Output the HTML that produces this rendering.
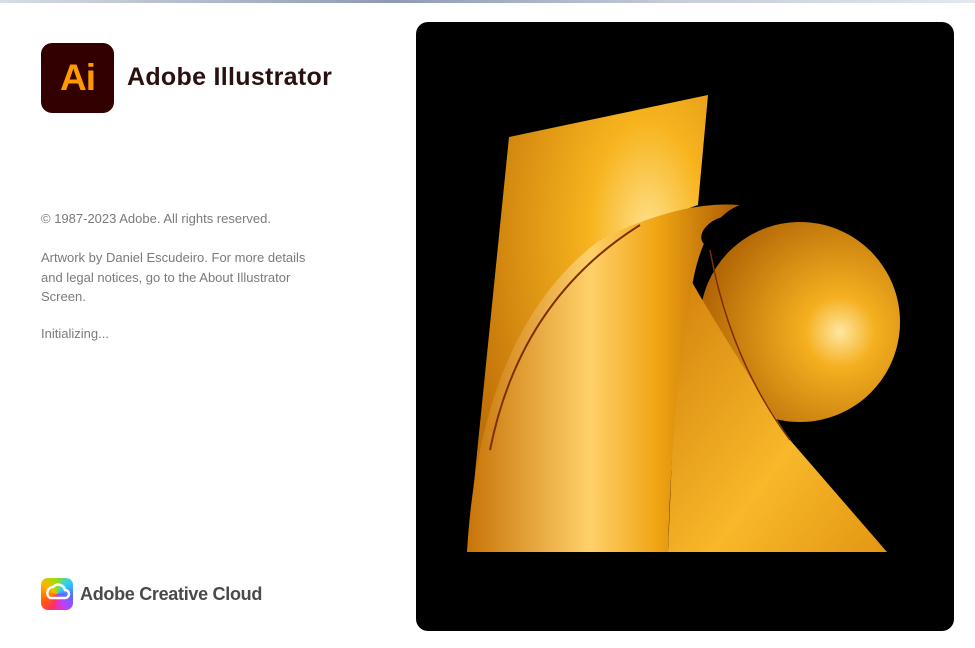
<!DOCTYPE html>
<html><head><meta charset="utf-8"><style>
html,body{margin:0;padding:0;width:975px;height:648px;overflow:hidden;background:#fff;font-family:"Liberation Sans",sans-serif;}
.top{position:absolute;left:0;top:0;width:975px;height:3px;background:linear-gradient(90deg,#d8dde6,#8e9bb3 40%,#c6cddb 70%,#e4e7ee);}
.logo{position:absolute;left:41px;top:43px;width:73px;height:70px;background:#330000;border-radius:11px;color:#ff9a00;font-weight:bold;font-size:37px;line-height:70px;text-align:center;letter-spacing:-1px;}
.title{position:absolute;left:127px;top:63px;font-size:25px;font-weight:bold;color:#2b1010;letter-spacing:0.3px;}
.txt{position:absolute;left:41px;color:#7a7a7a;font-size:13px;line-height:19.5px;letter-spacing:0;}
.panel{position:absolute;left:416px;top:22px;width:538px;height:609px;background:#000;border-radius:12px;overflow:hidden;}
.cc{position:absolute;left:41px;top:578px;width:32px;height:32px;border-radius:7px;background:conic-gradient(from 200deg,#ff2f5f,#ff6a00,#ffb300,#9be000,#2bd0ff,#5a6bff,#c23cff,#ff2f5f);}
.cct{position:absolute;left:80px;top:584px;font-size:18px;font-weight:bold;color:#4a4a4a;letter-spacing:-0.3px;}
</style></head><body>
<div class="top"></div>
<div class="logo">Ai</div>
<div class="title">Adobe Illustrator</div>
<div class="txt" style="top:209px">© 1987-2023 Adobe. All rights reserved.</div>
<div class="txt" style="top:248px">Artwork by Daniel Escudeiro. For more details<br>and legal notices, go to the About Illustrator<br>Screen.</div>
<div class="txt" style="top:324px">Initializing...</div>
<div class="cc"><svg width="32" height="32" viewBox="0 0 32 32"><path d="M9 20 a6 6 0 0 1 3-11 a7 7 0 0 1 12 3 a4 4 0 0 1 0 8 z" fill="none" stroke="#fff" stroke-width="2.5"/></svg></div>
<div class="cct">Adobe Creative Cloud</div>
<div class="panel">
<svg width="538" height="609" viewBox="416 22 538 609">
<defs>
<radialGradient id="g1" cx="0.75" cy="0.3" r="0.8"><stop offset="0" stop-color="#ffe08a"/><stop offset="0.3" stop-color="#f7b41e"/><stop offset="1" stop-color="#c07008"/></radialGradient>
<radialGradient id="g2" cx="0.7" cy="0.55" r="0.7"><stop offset="0" stop-color="#ffe7a0"/><stop offset="0.25" stop-color="#f5b020"/><stop offset="1" stop-color="#b06405"/></radialGradient>
<linearGradient id="g3" x1="0" y1="0" x2="1" y2="0"><stop offset="0" stop-color="#c77408"/><stop offset="0.45" stop-color="#ffd06a"/><stop offset="0.7" stop-color="#f0a412"/><stop offset="1" stop-color="#a85a04"/></linearGradient>
<linearGradient id="g4" x1="0" y1="0" x2="1" y2="1"><stop offset="0" stop-color="#d07e0a"/><stop offset="0.6" stop-color="#f8b82a"/><stop offset="1" stop-color="#e39612"/></linearGradient>
</defs>
<polygon points="509,137 708,95 698,205 600,240 467,552" fill="url(#g1)"/>
<circle cx="800" cy="322" r="100" fill="url(#g2)"/>
<path d="M680 260 Q700 300 790 440 L887 552 L668 552 Z" fill="url(#g4)"/>
<path d="M467 552 Q480 330 600 240 Q680 200 740 205 Q700 220 690 300 Q672 400 668 552 Z" fill="url(#g3)"/>
<path d="M490 450 Q520 300 640 225" stroke="#7a3000" stroke-width="2" fill="none"/>
<path d="M710 250 Q730 360 790 440" stroke="#7a3000" stroke-width="1.5" fill="none"/>
<ellipse cx="722" cy="232" rx="22" ry="14" transform="rotate(-25 722 232)" fill="#000"/>
</svg>
</div>
</body></html>
